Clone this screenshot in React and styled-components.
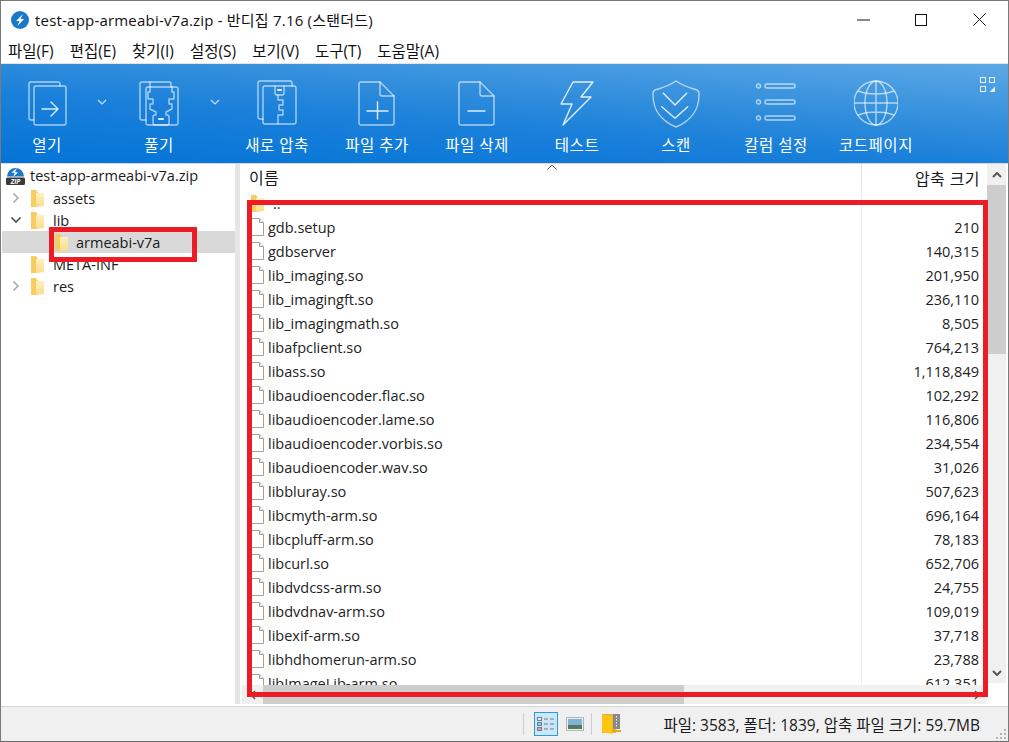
import React from "react";
import styled, { createGlobalStyle } from "styled-components";

const FONT = `"Open Sans", "Noto Sans CJK KR", sans-serif`;

const GlobalStyle = createGlobalStyle`
  html, body { margin: 0; padding: 0; background: #fff; }
  body { font-family: ${FONT}; color: #1a1a1a; overflow: hidden; }
`;

const Window = styled.div`
  position: relative;
  width: 1009px;
  height: 742px;
  box-sizing: border-box;
  border: 1px solid #7a7a7a;
  border-bottom: 1px solid #6a6a6a;
  display: flex;
  flex-direction: column;
  overflow: hidden;
`;
const TitleBar = styled.div`
  height: 37px;
  display: flex;
  align-items: center;
  padding-left: 10px;
  font-size: 15px;
  color: #111;
`;
const TitleText = styled.div`
  flex: 1;
  margin-left: 6px;
  white-space: nowrap;
  letter-spacing: 0.2px;
`;
const WinButton = styled.div`
  width: 58px;
  height: 37px;
  display: flex;
  align-items: center;
  justify-content: center;
`;
const MenuBar = styled.div`
  height: 24px;
  display: flex;
  padding-left: 7px;
  gap: 16px;
  align-items: center;
  font-size: 15.5px;
  color: #111;
  margin-bottom: 1px;
`;
const MenuItem = styled.span`
  white-space: nowrap;
`;
const Toolbar = styled.div`
  height: 100px;
  display: flex;
  position: relative;
  border-top: 1px solid #e4e4e4;
  box-sizing: border-box;
  background: linear-gradient(184deg, #5ca8e6 0%, #2d8bdb 41%, #1a80da 59%, #0374d6 100%);
`;
const ToolBtn = styled.div`
  position: absolute;
  top: 0;
  left: ${(p) => p.$x}px;
  width: 100px;
  height: 100px;
  display: flex;
  flex-direction: column;
  align-items: center;
  color: #fff;
  font-size: 15.5px;
`;
const ToolIcon = styled.div`
  height: 72px;
  padding-top: ${(p) => p.$top}px;
  box-sizing: border-box;
  display: flex;
  justify-content: center;
`;
const ToolLabel = styled.div`
  white-space: nowrap;
  line-height: 18px;
  letter-spacing: 0.5px;
`;
const Caret = styled.svg`
  position: absolute;
  top: 35px;
  left: ${(p) => p.$x}px;
`;
const GridIcon = styled.svg`
  position: absolute;
  top: 13px;
  right: 12px;
`;
const Body = styled.div`
  flex: 1;
  display: flex;
  min-height: 0;
  border-top: 1px solid #d8d8d8;
`;
const Tree = styled.div`
  width: 234px;
  padding-left: 1px;
  box-sizing: border-box;
  flex: none;
  font-size: 14.5px;
`;
const TreeRow = styled.div`
  height: 22px;
  display: flex;
  align-items: center;
  padding-left: ${(p) => p.$indent}px;
  background: ${(p) => (p.$selected ? "#d9d9d9" : "transparent")};
  white-space: nowrap;
  position: relative;
`;
const TreeRoot = styled(TreeRow)`
  height: 23px;
  gap: 5px;
`;
const Chevron = styled.svg`
  position: absolute;
  left: 8px;
  top: 6px;
`;
const TreeLabel = styled.span`
  margin-left: ${(p) => p.$gap || 9}px;
`;
const Splitter = styled.div`
  width: 5px;
  flex: none;
  margin-right: 2px;
  background: #e6e6e6;
`;
const Main = styled.div`
  flex: 1;
  min-width: 0;
  display: flex;
  flex-direction: column;
  position: relative;
`;
const ListArea = styled.div`
  flex: 1;
  min-height: 0;
  display: flex;
  position: relative;
`;
const ListCol = styled.div`
  flex: 1;
  min-width: 0;
  display: flex;
  flex-direction: column;
`;
const Header = styled.div`
  height: 27px;
  flex: none;
  display: grid;
  grid-template-columns: 620px 1fr;
  font-size: 16px;
  letter-spacing: 0.4px;
  align-items: center;
`;
const HeadName = styled.div`
  padding-left: 7px;
  height: 27px;
  line-height: 28px;
  position: relative;
  box-sizing: border-box;
  border-right: 1px solid #e3e3e3;
`;
const HeadSize = styled.div`
  text-align: right;
  padding-right: 7px;
`;
const SortMark = styled.svg`
  position: absolute;
  left: 305px;
  top: 0;
`;
const Rows = styled.div`
  flex: 1;
  min-height: 0;
  overflow: hidden;
  position: relative;
`;
const ColumnLine = styled.div`
  position: absolute;
  left: 619px;
  top: 0;
  bottom: 0;
  width: 1px;
  background: #e8eef7;
`;
const Row = styled.div`
  height: 24px;
  display: grid;
  grid-template-columns: 620px 1fr;
  align-items: center;
  font-size: 14.5px;
  color: #222;
`;
const NameCell = styled.div`
  display: flex;
  align-items: center;
  padding-left: 9px;
  gap: 4px;
  white-space: nowrap;
`;
const ParentLabel = styled.span`
  margin-left: 5px;
`;
const SizeCell = styled.div`
  text-align: right;
  padding-right: 8px;
`;
const VScroll = styled.div`
  width: 19px;
  flex: none;
  margin: 0 2px 2px 0;
  background: #f0f0f0;
  display: flex;
  flex-direction: column;
`;
const ScrollBtn = styled.div`
  height: 21px;
  flex: none;
  display: flex;
  align-items: center;
  justify-content: center;
`;
const VThumb = styled.div`
  height: 169px;
  flex: none;
  background: #cdcdcd;
`;
const VFill = styled.div`
  flex: 1;
`;
const HScroll = styled.div`
  height: 19px;
  flex: none;
  margin-right: 21px;
  background: #f0f0f0;
  display: flex;
  align-items: center;
`;
const HThumb = styled.div`
  width: 421px;
  height: 19px;
  background: #cdcdcd;
`;
const HEnd = styled.div`
  width: 21px;
  height: 19px;
  flex: none;
  display: flex;
  align-items: center;
  justify-content: center;
`;
const HFill = styled.div`
  flex: 1;
`;
const Status = styled.div`
  height: 35px;
  flex: none;
  margin-top: 2px;
  background: #f0f0f0;
  border-top: 1px solid #d4d4d4;
  box-sizing: border-box;
  display: flex;
  align-items: center;
  font-size: 15.5px;
  position: relative;
`;
const StatusSep = styled.div`
  width: 1px;
  height: 22px;
  background: #cfcfcf;
  margin-left: ${(p) => p.$ml}px;
`;
const ViewBtn = styled.div`
  width: 24px;
  height: 24px;
  margin-left: ${(p) => p.$ml}px;
  box-sizing: border-box;
  border: 1px solid ${(p) => (p.$active ? "#2b9be0" : "transparent")};
  background: ${(p) => (p.$active ? "#cde6f7" : "transparent")};
  display: flex;
  align-items: center;
  justify-content: center;
`;
const StatusText = styled.div`
  margin-left: auto;
  margin-right: 28px;
  white-space: nowrap;
`;
const Grip = styled.svg`
  position: absolute;
  right: 1px;
  bottom: 1px;
`;
const RedBox = styled.div`
  position: absolute;
  left: ${(p) => p.$l}px;
  top: ${(p) => p.$t}px;
  width: ${(p) => p.$w}px;
  height: ${(p) => p.$h}px;
  box-sizing: border-box;
  border: 5px solid #ed1c24;
`;
const FolderSvg = styled.svg`
  flex: none;
`;

const ST = { fill: "none", stroke: "rgba(255,255,255,0.62)", strokeWidth: 1.4, strokeLinejoin: "round", strokeLinecap: "round" };
const BRIGHT = "rgba(255,255,255,0.85)";

function Icon({ w = 44, h = 46, children }) {
  return (
    <svg width={w} height={h} viewBox={`0 0 ${w} ${h}`} {...ST}>
      {children}
    </svg>
  );
}

const icons = {
  open: (
    <Icon w={40}>
      <path d="M7 40H4a2 2 0 0 1-2-2V4a2 2 0 0 1 2-2h27a2 2 0 0 1 2 2v2" />
      <rect x="7" y="6" width="32" height="39" rx="2" />
      <path d="M15 29h15M24 22l7 7-7 7" stroke={BRIGHT} />
    </Icon>
  ),
  extract: (
    <Icon w={42}>
      <path d="M8 40H4a2 2 0 0 1-2-2V4a2 2 0 0 1 2-2h27a2 2 0 0 1 2 2v3" />
      <rect x="8" y="7" width="32" height="38" rx="2" />
      <path d="M12 2v10h-2v7h5v5h-3v5l6 3v3h-1a2 2 0 0 0-2 2v6a2 2 0 0 0 2 2h12a2 2 0 0 0 2-2v-6a2 2 0 0 0-2-2h-1v-3l6-3v-5h-3v-5h5v-7h-2V7" />
      <path d="M21 39h4" stroke={BRIGHT} strokeWidth="2" />
    </Icon>
  ),
  compress: (
    <Icon w={40}>
      <path d="M6 40H3a2 2 0 0 1-2-2V4a2 2 0 0 1 2-2h30a2 2 0 0 1 2 2v3" />
      <rect x="6" y="7" width="33" height="38" rx="2" />
      <path d="M18 7v7a2 2 0 0 0 2 2h5a2 2 0 0 0 2-2V7" />
      <path d="M21 11h3" stroke={BRIGHT} strokeWidth="2" />
      <path d="M21 16v5h5v5h-4v5h4v5h-5v9" />
    </Icon>
  ),
  add: (
    <Icon w={38}>
      <path d="M3 2h19l14 14v27a2 2 0 0 1-2 2H3a2 2 0 0 1-2-2V4a2 2 0 0 1 2-2z" />
      <path d="M22 2v12a2 2 0 0 0 2 2h12" />
      <path d="M9 31h21M19.5 22v17" stroke={BRIGHT} />
    </Icon>
  ),
  remove: (
    <Icon w={38}>
      <path d="M3 2h19l14 14v27a2 2 0 0 1-2 2H3a2 2 0 0 1-2-2V4a2 2 0 0 1 2-2z" />
      <path d="M22 2v12a2 2 0 0 0 2 2h12" />
      <path d="M10 31h17" stroke={BRIGHT} />
    </Icon>
  ),
  test: (
    <Icon w={34}>
      <path d="M13 2h20L21 17h10L3 45l9-21H1z" stroke={BRIGHT} />
    </Icon>
  ),
  scan: (
    <Icon w={50} h={50}>
      <path d="M25 2c7 5 14 7 21 9 2 1 2 2 2 4 0 15-6 26-23 33C8 41 2 30 2 15c0-2 0-3 2-4 7-2 14-4 21-9z" />
      <path d="M12.3 14.3L24 26l11.7-11.7M10.7 27.7L24 39.3l12.7-11.6" stroke={BRIGHT} />
    </Icon>
  ),
  columns: (
    <Icon w={42}>
      <circle cx="3.5" cy="6" r="2" />
      <circle cx="3.5" cy="22" r="2" />
      <circle cx="3.5" cy="38" r="2" />
      <rect x="10" y="4" width="30" height="4" rx="2" />
      <rect x="10" y="20" width="30" height="4" rx="2" />
      <rect x="10" y="36" width="30" height="4" rx="2" />
    </Icon>
  ),
  globe: (
    <Icon>
      <circle cx="22" cy="23" r="22" />
      <ellipse cx="22" cy="23" rx="11" ry="22" />
      <path d="M22 1v44M0 23h44M4 11c10 4 26 4 36 0M4 35c10-4 26-4 36 0" />
    </Icon>
  ),
};

const tools = [
  { x: -4, key: "open", label: "열기", top: 16 },
  { x: 108, key: "extract", label: "풀기", top: 16 },
  { x: 226, key: "compress", label: "새로 압축", top: 15 },
  { x: 326, key: "add", label: "파일 추가", top: 16 },
  { x: 426, key: "remove", label: "파일 삭제", top: 16 },
  { x: 526, key: "test", label: "테스트", top: 16 },
  { x: 625, key: "scan", label: "스캔", top: 15 },
  { x: 725, key: "columns", label: "칼럼 설정", top: 16 },
  { x: 825, key: "globe", label: "코드페이지", top: 16 },
];

const menus = ["파일(F)", "편집(E)", "찾기(I)", "설정(S)", "보기(V)", "도구(T)", "도움말(A)"];

const files = [
  ["gdb.setup", "210"],
  ["gdbserver", "140,315"],
  ["lib_imaging.so", "201,950"],
  ["lib_imagingft.so", "236,110"],
  ["lib_imagingmath.so", "8,505"],
  ["libafpclient.so", "764,213"],
  ["libass.so", "1,118,849"],
  ["libaudioencoder.flac.so", "102,292"],
  ["libaudioencoder.lame.so", "116,806"],
  ["libaudioencoder.vorbis.so", "234,554"],
  ["libaudioencoder.wav.so", "31,026"],
  ["libbluray.so", "507,623"],
  ["libcmyth-arm.so", "696,164"],
  ["libcpluff-arm.so", "78,183"],
  ["libcurl.so", "652,706"],
  ["libdvdcss-arm.so", "24,755"],
  ["libdvdnav-arm.so", "109,019"],
  ["libexif-arm.so", "37,718"],
  ["libhdhomerun-arm.so", "23,788"],
  ["libImageLib-arm.so", "612,351"],
];

function Folder() {
  return (
    <FolderSvg width="13" height="17" viewBox="0 0 13 17">
      <defs>
        <linearGradient id="fold" x1="0" y1="0" x2="0" y2="1">
          <stop offset="0" stopColor="#fff0bd" />
          <stop offset="1" stopColor="#fbdc8a" />
        </linearGradient>
      </defs>
      <path d="M0 0h5l2 3v14H0z" fill="#f7cc62" />
      <path d="M5 3h8v13l-8 1z" fill="url(#fold)" />
    </FolderSvg>
  );
}

function FileIcon() {
  return (
    <FolderSvg width="13" height="18" viewBox="0 0 13 18">
      <path d="M.5.5h8l4 4v13H.5z" fill="#fff" stroke="#a0a0a0" />
      <path d="M8.5.5v4h4" fill="#eee" stroke="#a0a0a0" />
    </FolderSvg>
  );
}

function Chev({ open }) {
  return (
    <Chevron width="12" height="10" viewBox="0 0 12 10" fill="none" stroke={open ? "#444" : "#a6a6a6"} strokeWidth="1.5">
      {open ? <path d="M1.5 2.5L6 7l4.5-4.5" /> : <path d="M3.5 .5L8 5 3.5 9.5" />}
    </Chevron>
  );
}

export default function App() {
  return (
    <Window>
      <GlobalStyle />
      <TitleBar>
        <svg width="18" height="18" viewBox="0 0 18 18">
          <circle cx="9" cy="9" r="9" fill="#1b78c8" />
          <path d="M12 3L5 10h3.5L6.5 15l6.5-7H9.5z" fill="#fff" />
        </svg>
        <TitleText>test-app-armeabi-v7a.zip - 반디집 7.16 (스탠더드)</TitleText>
        <WinButton>
          <svg width="13" height="2"><path d="M0 1h13" stroke="#111" /></svg>
        </WinButton>
        <WinButton>
          <svg width="12" height="12"><rect x=".5" y=".5" width="11" height="11" fill="none" stroke="#111" /></svg>
        </WinButton>
        <WinButton>
          <svg width="13" height="13"><path d="M.5.5l12 12M12.5.5l-12 12" stroke="#111" fill="none" /></svg>
        </WinButton>
      </TitleBar>
      <MenuBar>
        {menus.map((m) => (
          <MenuItem key={m}>{m}</MenuItem>
        ))}
      </MenuBar>
      <Toolbar>
        {tools.map((t) => (
          <ToolBtn key={t.key} $x={t.x}>
            <ToolIcon $top={t.top}>{icons[t.key]}</ToolIcon>
            <ToolLabel>{t.label}</ToolLabel>
          </ToolBtn>
        ))}
        <Caret $x={96} width="10" height="6" viewBox="0 0 10 6" fill="none" stroke="rgba(255,255,255,.75)" strokeWidth="1.2"><path d="M1 1l4 4 4-4" /></Caret>
        <Caret $x={209} width="10" height="6" viewBox="0 0 10 6" fill="none" stroke="rgba(255,255,255,.75)" strokeWidth="1.2"><path d="M1 1l4 4 4-4" /></Caret>
        <GridIcon width="16" height="16" viewBox="0 0 16 16" fill="none" stroke="rgba(255,255,255,.85)">
          <rect x=".5" y=".5" width="5" height="5" />
          <rect x="9.5" y=".5" width="5" height="5" />
          <rect x=".5" y="9.5" width="5" height="5" />
          <path d="M15 9.5V15H9.5z" fill="rgba(255,255,255,.85)" stroke="none" />
        </GridIcon>
      </Toolbar>
      <Body>
        <Tree>
          <TreeRoot $indent={4}>
            <FolderSvg width="19" height="19" viewBox="0 0 19 19">
              <path d="M1 10.5a8.5 8.5 0 0 1 17 0z" fill="#1b78c8" />
              <path d="M11 2L5.5 6.5l3 .5-1 3.5 4.5-4-3-.5z" fill="#fff" />
              <rect x="0" y="11.5" width="19" height="7.5" rx="1.5" fill="#3a3a3a" />
              <text x="9.5" y="17.6" textAnchor="middle" fontSize="6.5" fontWeight="700" fontStyle="italic" fill="#fff">ZIP</text>
            </FolderSvg>
            test-app-armeabi-v7a.zip
          </TreeRoot>
          <TreeRow $indent={29}><Chev /><Folder /><TreeLabel>assets</TreeLabel></TreeRow>
          <TreeRow $indent={29}><Chev open /><Folder /><TreeLabel>lib</TreeLabel></TreeRow>
          <TreeRow $indent={53} $selected><Folder /><TreeLabel $gap={8}>armeabi-v7a</TreeLabel></TreeRow>
          <TreeRow $indent={29}><Folder /><TreeLabel>META-INF</TreeLabel></TreeRow>
          <TreeRow $indent={29}><Chev /><Folder /><TreeLabel>res</TreeLabel></TreeRow>
        </Tree>
        <Splitter />
        <Main>
          <ListArea>
            <ListCol>
              <Header>
                <HeadName>
                  이름
                  <SortMark width="10" height="6" viewBox="0 0 10 6" fill="none" stroke="#666"><path d="M.5 5.5L5 1l4.5 4.5" /></SortMark>
                </HeadName>
                <HeadSize>압축 크기</HeadSize>
              </Header>
              <Rows>
                <ColumnLine />
                <Row>
                  <NameCell><Folder /><ParentLabel>..</ParentLabel></NameCell>
                </Row>
                {files.map(([name, size]) => (
                  <Row key={name}>
                    <NameCell><FileIcon />{name}</NameCell>
                    <SizeCell>{size}</SizeCell>
                  </Row>
                ))}
              </Rows>
            </ListCol>
            <VScroll>
              <ScrollBtn>
                <svg width="10" height="6" fill="none" stroke="#555" strokeWidth="2"><path d="M1 5l4-4 4 4" /></svg>
              </ScrollBtn>
              <VThumb />
              <VFill />
              <ScrollBtn>
                <svg width="10" height="6" fill="none" stroke="#555" strokeWidth="2"><path d="M1 1l4 4 4-4" /></svg>
              </ScrollBtn>
            </VScroll>
          </ListArea>
          <HScroll>
            <HEnd><svg width="6" height="10" fill="none" stroke="#555" strokeWidth="1.5"><path d="M5 1L1 5l4 4" /></svg></HEnd>
            <HThumb />
            <HFill />
            <HEnd><svg width="6" height="10" fill="none" stroke="#555" strokeWidth="1.5"><path d="M1 1l4 4-4 4" /></svg></HEnd>
          </HScroll>
        </Main>
      </Body>
      <Status>
        <StatusSep $ml={522} />
        <ViewBtn $ml={10} $active>
          <svg width="20" height="16" fill="none" stroke="#6b7f8f">
            <rect x="1.5" y="1.5" width="4" height="3" fill="#e8eef2" />
            <rect x="1.5" y="6.5" width="4" height="3" fill="#9cc4ec" />
            <rect x="1.5" y="11.5" width="4" height="3" fill="#e89a9a" />
            <path d="M8 3h4M14 3h4M8 8h4M14 8h4M8 13h4M14 13h4" />
          </svg>
        </ViewBtn>
        <ViewBtn $ml={5}>
          <svg width="18" height="14">
            <rect x=".5" y=".5" width="17" height="13" fill="#eee" stroke="#b5b5b5" />
            <rect x="2" y="2" width="14" height="10" fill="#7fb4d8" />
            <rect x="2" y="8" width="14" height="4" fill="#56785e" />
          </svg>
        </ViewBtn>
        <StatusSep $ml={4} />
        <ViewBtn $ml={8}>
          <svg width="22" height="22" viewBox="0 0 22 22">
            <path d="M1 1h14v19l-14-0z" fill="#e8b23a" />
            <path d="M1 2l10 1v18l-10-2z" fill="#fcc60f" />
            <rect x="12" y="1" width="7" height="15" fill="#8a8a8a" />
            <path d="M15.5 3v11" stroke="#eee" strokeDasharray="1.5 1.5" />
            <path d="M11 17h9v2h-9z" fill="#e8a917" />
          </svg>
        </ViewBtn>
        <StatusText>파일: 3583, 폴더: 1839, 압축 파일 크기: 59.7MB</StatusText>
        <Grip width="14" height="14" fill="#b5b5b5">
          <rect x="11" y="3" width="2" height="2" /><rect x="7" y="7" width="2" height="2" /><rect x="11" y="7" width="2" height="2" /><rect x="3" y="11" width="2" height="2" /><rect x="7" y="11" width="2" height="2" /><rect x="11" y="11" width="2" height="2" />
        </Grip>
      </Status>
      <RedBox $l={48} $t={226} $w={148} $h={35} />
      <RedBox $l={246} $t={199} $w={741} $h={497} />
    </Window>
  );
}
